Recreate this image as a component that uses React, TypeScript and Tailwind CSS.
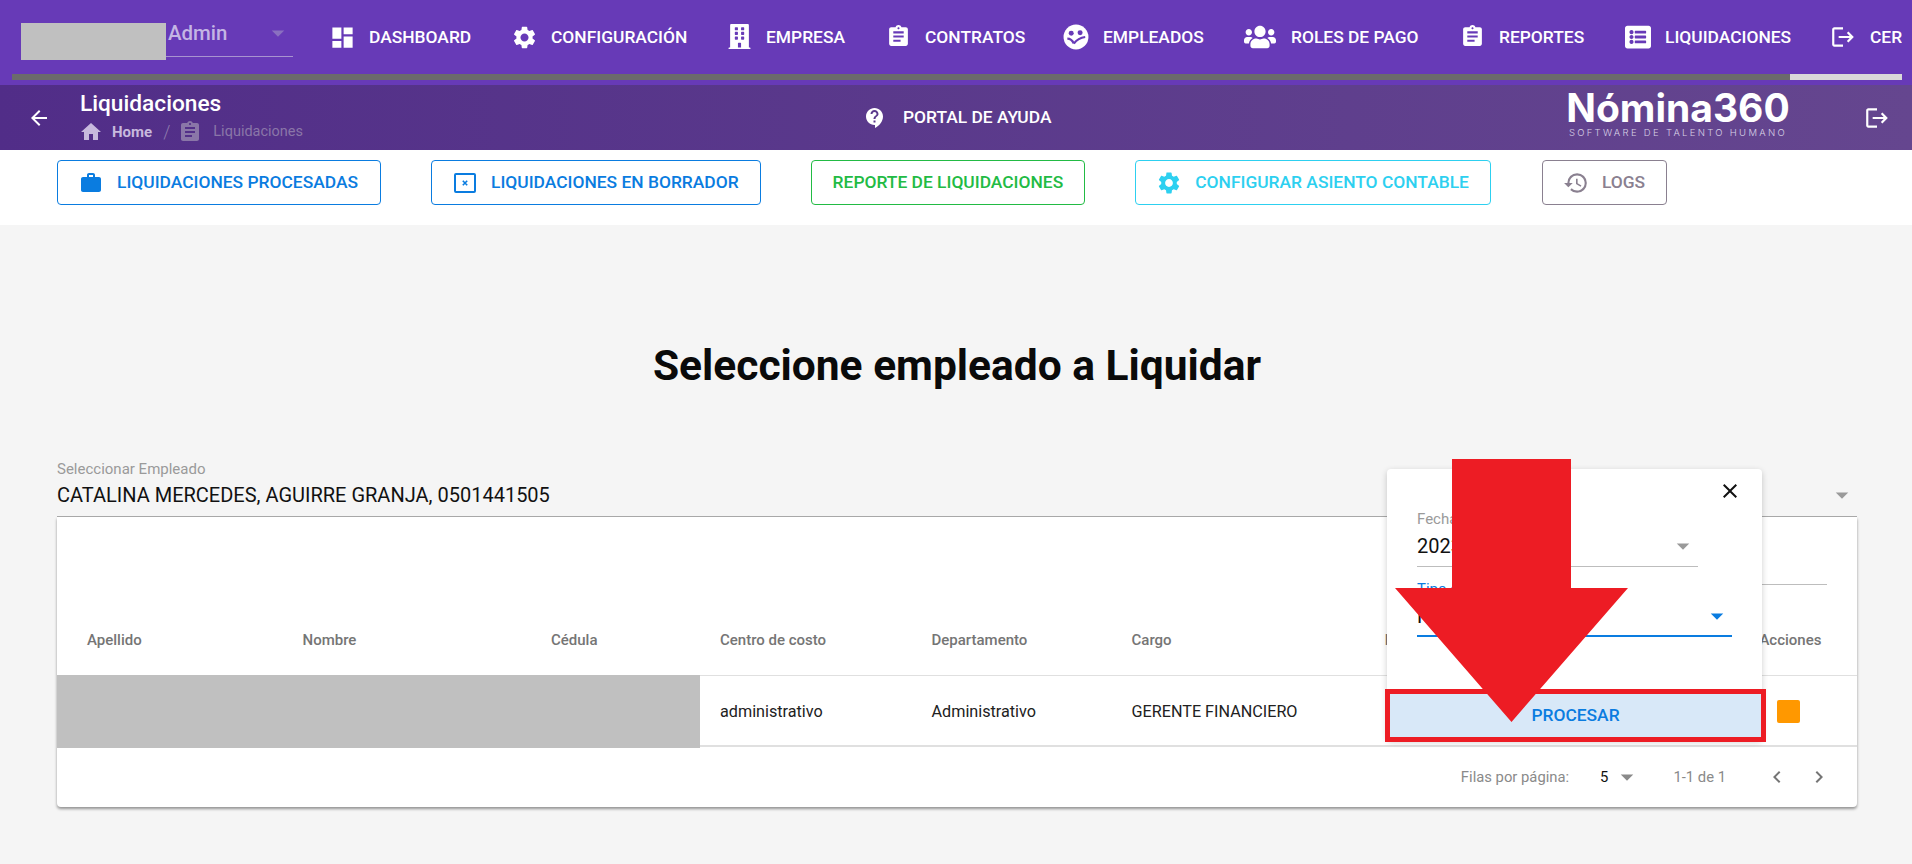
import React from 'react';
import {
  MdDashboard,
  MdSettings,
  MdAssignment,
  MdLogout,
  MdArrowBack,
  MdHome,
  MdContactSupport,
  MdWork,
  MdHistory,
  MdClose,
  MdArrowDropDown,
  MdChevronLeft,
  MdChevronRight,
} from 'react-icons/md';
import { FaBuilding, FaUsers, FaListAlt } from 'react-icons/fa';

const FaceIcon = () => (
  <svg width="26" height="26" viewBox="0 0 24 24">
    <circle cx="12" cy="12" r="11.5" fill="#fff" />
    <circle cx="7.6" cy="8.6" r="2.3" fill="#673ab7" />
    <circle cx="15.8" cy="8" r="2.3" fill="#673ab7" />
    <path d="M4 13.5c2.5 0 4.5 1.2 6 4.5M20.5 12c-3.5.4-7.5 2-10.5 6" fill="none" stroke="#673ab7" strokeWidth="2" />
  </svg>
);

const DraftIcon = () => (
  <svg width="24" height="24" viewBox="0 0 24 24" fill="none" stroke="currentColor">
    <rect x="2" y="3" width="20" height="18" rx="1" strokeWidth="2" />
    <path d="M9.8 9.8l4.4 4.4M14.2 9.8l-4.4 4.4" strokeWidth="1.6" />
  </svg>
);

const navItems = [
  { label: 'DASHBOARD', icon: <MdDashboard size={27} />, w: 'w-[182px]', box: 'w-[26px]' },
  { label: 'CONFIGURACIÓN', icon: <MdSettings size={27} />, w: 'w-[215px]', box: 'w-[26px]' },
  { label: 'EMPRESA', icon: <FaBuilding size={25} />, w: 'w-[159px]', box: 'w-[26px]' },
  { label: 'CONTRATOS', icon: <MdAssignment size={25} />, w: 'w-[178px]', box: 'w-[26px]' },
  { label: 'EMPLEADOS', icon: <FaceIcon />, w: 'w-[180px]', box: 'w-[26px]' },
  { label: 'ROLES DE PAGO', icon: <FaUsers size={32} />, w: 'w-[216px]', box: 'w-[34px]' },
  { label: 'REPORTES', icon: <MdAssignment size={25} />, w: 'w-[166px]', box: 'w-[26px]' },
  { label: 'LIQUIDACIONES', icon: <FaListAlt size={26} />, w: 'w-[205px]', box: 'w-[26px]' },
  { label: 'CERRAR', icon: <MdLogout size={26} />, w: 'w-[200px]', box: 'w-[26px]' },
];

const columns = ['Apellido', 'Nombre', 'Cédula', 'Centro de costo', 'Departamento', 'Cargo', 'Fecha de ingreso', 'Acciones'];

const gridCols = 'grid grid-cols-[225.5px_248.5px_169px_211.5px_200px_253.3px_374.6px_117.4px]';

const OutlineButton = ({ icon, label, className }: { icon?: React.ReactNode; label: string; className: string }) => (
  <button className={`flex h-[45px] items-center gap-[14px] rounded-[4px] border px-[21px] text-[17.4px] font-medium ${className}`}>
    {icon}
    <span>{label}</span>
  </button>
);

export default function App() {
  return (
    <div className="relative h-[864px] w-[1912px] overflow-hidden bg-[#f5f5f5] font-[Roboto,sans-serif]">
      {/* top nav */}
      <div className="h-[85px] bg-[#673ab7] pl-[12px] pr-[10px]">
        <div className="flex h-[74px] items-center overflow-hidden text-white">
          <div className="ml-[9px] mt-[23px] flex shrink-0 self-start">
            <div className="h-[37px] w-[145px] bg-[#c0c0c0]" />
            <div className="flex h-[34px] w-[127px] items-start justify-between border-b border-[#a893d0] pl-[2px] text-[20.4px] font-medium leading-[20px] text-[#c4b5e4]">
              <span>Admin</span>
              <MdArrowDropDown size={30} className="-mt-[5px] text-[#8a70c0]" />
            </div>
          </div>
          <div className="ml-[36px] flex shrink-0 items-center">
            {navItems.map((item) => (
              <div key={item.label} className={`flex shrink-0 items-center gap-[14px] text-[17.4px] font-medium ${item.w}`}>
                <span className={`flex shrink-0 justify-center [&>svg]:shrink-0 ${item.box}`}>{item.icon}</span>
                <span>{item.label}</span>
              </div>
            ))}
          </div>
        </div>
        <div className="flex h-[6px] justify-end bg-[#6b6b6b]">
          <div className="h-full w-[112px] bg-[#d9d9d9]" />
        </div>
      </div>

      {/* page header */}
      <div className="flex h-[65px] items-center bg-gradient-to-r from-[#512d88] to-[#65468f] text-white">
        <MdArrowBack size={24} className="ml-[27px]" />
        <div className="ml-[29px] w-[783px] self-start pt-[6px]">
          <div className="text-[22.7px] font-medium leading-[26px]">Liquidaciones</div>
          <div className="mt-[3px] flex items-center text-[14.5px] leading-[22px]">
            <MdHome size={24} className="-ml-px text-[#c7b9dd]" />
            <span className="ml-[9px] text-[15px] font-bold text-[#c7b9dd]">Home</span>
            <span className="ml-[11px] text-[18px] font-light text-[#8f7cae]">/</span>
            <MdAssignment size={24} className="ml-[8px] text-[#8a76a8]" />
            <span className="ml-[11px] text-[#8a76a8]">Liquidaciones</span>
          </div>
        </div>
        <MdContactSupport size={24} />
        <span className="ml-[16px] text-[17.4px] font-medium">PORTAL DE AYUDA</span>
        <div className="ml-[516px] flex w-[221px] flex-col items-center self-start pt-[4px] font-[Inter,sans-serif]">
          <span className="text-[39px] font-bold leading-[38px]">Nómina360</span>
          <span className="text-[9.5px] font-light leading-[12px] tracking-[2.3px] text-[#d9d2e6]">SOFTWARE DE TALENTO HUMANO</span>
        </div>
        <MdLogout size={26} className="ml-[76px]" />
      </div>

      {/* action buttons */}
      <div className="flex h-[75px] items-start gap-[50px] bg-white pl-[57px] pt-[10px]">
        <OutlineButton icon={<MdWork size={24} />} label="LIQUIDACIONES PROCESADAS" className="w-[324px] border-[#0a7ce0] text-[#0a7ce0]" />
        <OutlineButton icon={<DraftIcon />} label="LIQUIDACIONES EN BORRADOR" className="border-[#0a7ce0] text-[#0a7ce0]" />
        <OutlineButton label="REPORTE DE LIQUIDACIONES" className="border-[#22bb44] text-[#22bb44]" />
        <OutlineButton icon={<MdSettings size={26} className="-mx-px" />} label="CONFIGURAR ASIENTO CONTABLE" className="border-[#2dd0f0] text-[#2dd0f0]" />
        <OutlineButton icon={<MdHistory size={26} className="-mx-px" />} label="LOGS" className="ml-px border-[#8a8090] text-[#8a8090]" />
      </div>

      {/* main */}
      <div className="ml-[57px] w-[1800px]">
        <h1 className="mt-[112px] text-center text-[42.5px] font-bold leading-[58px] text-[#0a0a0a]">Seleccione empleado a Liquidar</h1>

        <div className="mt-[65px] flex items-end justify-between border-b border-[#aaaaaa] pb-[9px]">
          <div>
            <div className="text-[15px] leading-[18px] text-[#9a9a9a]">Seleccionar Empleado</div>
            <div className="mt-[5px] text-[20px] leading-[24px] text-[#111111]">CATALINA MERCEDES, AGUIRRE GRANJA, 0501441505</div>
          </div>
          <MdArrowDropDown size={30} className="-mb-[3px] text-[#9a9a9a]" />
        </div>

        <div className="h-[290px] rounded-b-[4px] bg-white shadow-[0_2px_3px_rgba(0,0,0,0.4)]">
          <div className="flex h-[68px] justify-end pr-[30px]">
            <div className="w-[300px] border-b border-[#bdbdbd]" />
          </div>
          <div className={`${gridCols} h-[90px] items-center pt-[21px] text-[15px] font-medium text-[#757575]`}>
            {columns.map((c, i) => (
              <div key={c} className={i === 0 ? 'pl-[30px]' : 'pl-[20px]'}>
                {c}
              </div>
            ))}
          </div>
          <div className={`${gridCols} h-[72px] items-center border-t border-b-2 border-[#e0e0e0] text-[16.2px] text-[#212121]`}>
            <div className="col-span-3 -mt-px h-[73px] bg-[#c0c0c0]" />
            <div className="pl-[20px]">administrativo</div>
            <div className="pl-[20px]">Administrativo</div>
            <div className="pl-[20px]">GERENTE FINANCIERO</div>
            <div />
            <div className="pl-[38px]">
              <div className="mb-[2px] h-[23px] w-[23px] rounded-[2px] bg-[#ff9800]" />
            </div>
          </div>
          <div className="flex h-[60px] items-center justify-end text-[14.8px] text-[#8a8a8a]">
            <span>Filas por página:</span>
            <span className="ml-[31px] text-[#111111]">5</span>
            <MdArrowDropDown size={30} className="ml-[4px] text-[#8a8a8a]" />
            <span className="ml-[31px]">1-1 de 1</span>
            <MdChevronLeft size={24} className="ml-[39px] text-[#757575]" />
            <MdChevronRight size={24} className="ml-[18px] mr-[26px] text-[#757575]" />
          </div>
        </div>
      </div>

      {/* popover with the process form */}
      <div className="absolute left-[1387px] top-[469px] flex h-[271px] w-[375px] flex-col rounded-[4px] bg-white shadow-[0_2px_6px_rgba(0,0,0,0.2)]">
        <div className="flex justify-end pr-[20px] pt-[10px]">
          <MdClose size={24} className="text-[#111111]" />
        </div>
        <div className="ml-[30px] mt-[8px] w-[281px] border-b border-[#bdbdbd]">
          <div className="text-[15px] leading-[16px] text-[#9a9a9a]">Fecha de corte</div>
          <div className="flex h-[39px] items-center justify-between pb-[2px] text-[20px] text-[#111111]">
            <span>2023-05-31</span>
            <MdArrowDropDown size={30} className="text-[#9a9a9a]" />
          </div>
        </div>
        <div className="ml-[30px] mt-[14px] w-[315px] border-b-2 border-[#0a7ce0]">
          <div className="text-[15px] leading-[16px] text-[#0a7ce0]">Tipo de liquidación</div>
          <div className="flex h-[38px] items-center justify-between text-[20px] text-[#111111]">
            <span>Renuncia</span>
            <MdArrowDropDown size={30} className="text-[#0a7ce0]" />
          </div>
        </div>
        <button className="mb-[3px] ml-[3px] mr-[1px] mt-auto h-[43px] bg-[#d8e8f8] text-[17.4px] font-medium text-[#0a7ce0]">PROCESAR</button>
      </div>

      {/* annotation drawn over the screenshot */}
      <div className="absolute left-[1385px] top-[689px] h-[53px] w-[381px] border-[5px] border-[#ed1c24]" />
      <svg className="absolute left-[1395px] top-[459px]" width="233" height="263" viewBox="0 0 233 263">
        <polygon points="57,0 176,0 176,129 233,129 116.5,263 0,129 57,129" fill="#ed1c24" />
      </svg>
    </div>
  );
}
